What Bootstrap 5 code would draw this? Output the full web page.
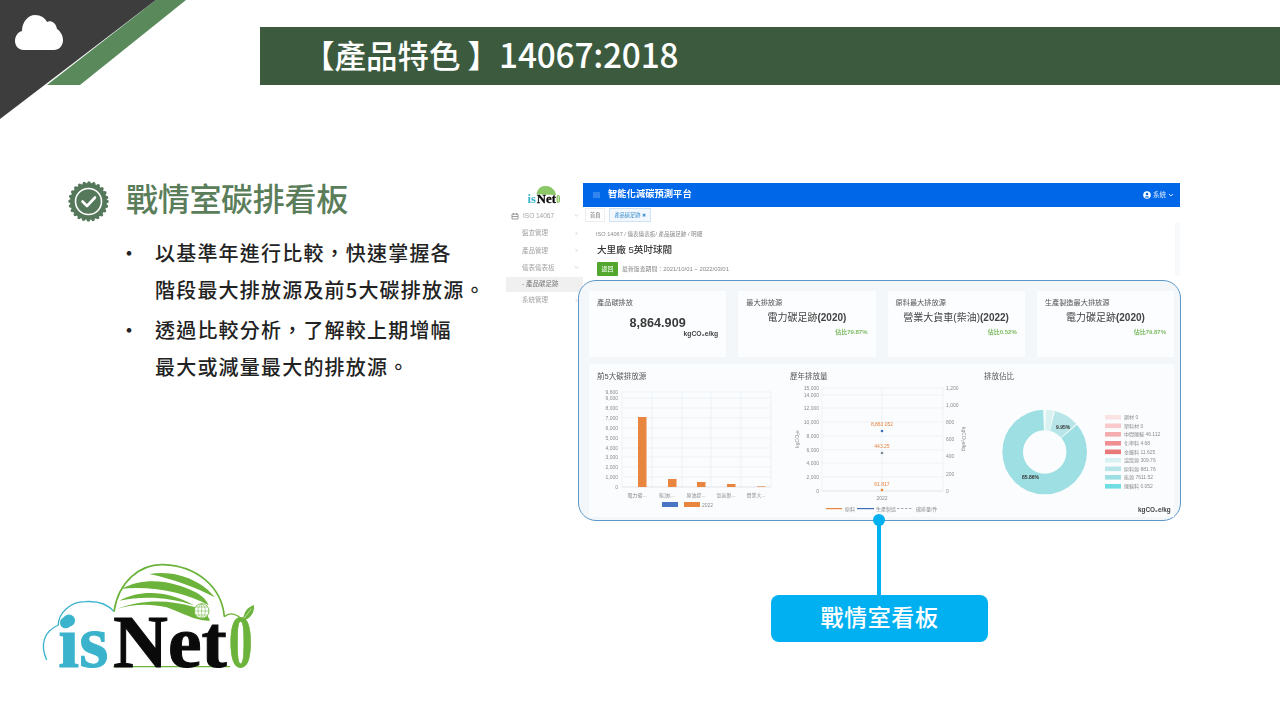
<!doctype html>
<html lang="zh-Hant">
<head>
<title>產品特色 14067:2018</title>
<meta charset="utf-8" />
<meta name="viewport" content="width=device-width, initial-scale=1" />
<link href="https://cdn.jsdelivr.net/npm/bootstrap@5.3.3/dist/css/bootstrap.min.css" rel="stylesheet" />
<script src="https://cdn.jsdelivr.net/npm/bootstrap@5.3.3/dist/js/bootstrap.bundle.min.js"></script>
<style>
  html, body { margin: 0; background: #fff; }
  body { font-family: "Noto Sans CJK TC", "Noto Sans", sans-serif; overflow: hidden; }
  .slide { position: relative; width: 1280px; height: 720px; overflow: hidden; }
  .corner { position: absolute; left: 0; top: 0; }
  .title-bar { margin: 27px 0 0 260px; height: 58px; background: #3c5a3e; color: #fff; font-size: 31.5px; line-height: 54px; padding-left: 43px; font-weight: 500; }
  .title-num { font-size: 33.4px; letter-spacing: -.2px; }
  .left-col { width: 506px; height: 595px; padding: 96px 0 0 30px; }
  .feat-head { margin-left: 38px; gap: 17px; color: #5a7d5a; font-size: 32px; font-weight: 500; letter-spacing: -.3px; }
  .feat-head span { line-height: 33px; margin-bottom: 8px; }
  .feat-list { margin: 12px 0 0 38px; padding: 0; list-style: none; color: #222; font-size: 20px; line-height: 37px; font-weight: 500; letter-spacing: 1.2px; }
  .feat-list li { position: relative; padding-left: 87px; }
  .feat-list li + li { margin-top: 3px; }
  .feat-list li::before { content: "•"; position: absolute; left: 51px; }
  .logo-box { margin-top: auto; margin-bottom: -4px; }
  .right-col { width: 675px; padding-top: 98px; }

  .shot { height: 338px; filter: blur(.45px); font-family: "Liberation Sans", "Noto Sans CJK TC", sans-serif; }
  .shot-side { width: 77px; color: #a4a4a4; font-size: 6.5px; }
  .shot-logo { height: 24px; padding: 3px 0 0 19px; }
  .side-row { height: 17.4px; padding: 0 4px 0 16px; }
  .side-row.on { height: 15px; background: #f0f0f0; color: #777; margin: 0; }
  .side-top { padding-left: 5px; }
  .shot-main { width: 597px; }
  .shot-bar { height: 24px; background: #0068e8; color: #fff; padding: 0 6px 0 10px; font-size: 9.3px; font-weight: 700; gap: 8px; }
  .shot-user { font-size: 6.5px; font-weight: 400; gap: 2px; color: #dce9fb; }
  .shot-tabs { height: 16px; padding: 1px 0 0 2px; gap: 4px; font-size: 5.2px; color: #666; }
  .shot-tab { height: 14px; padding: 0 4px; border: 1px solid #eee; line-height: 12px; }
  .shot-tab.on { border-color: #cfe3f5; background: #f2f8fd; color: #3d8fd1; }
  .shot-head { height: 53px; border-right: 5px solid #f7f9fb; }
  .shot-crumb { padding: 5px 0 0 13px; height: 17px; font-size: 5.6px; line-height: 12px; color: #888; }
  .shot-name { margin: 2px 0 0 14px; height: 16px; font-size: 9.6px; line-height: 16px; color: #333; font-weight: 500; }
  .shot-range { margin: 4px 0 0 14px; height: 14px; gap: 4px; font-size: 5.9px; color: #888; }
  .back-btn { width: 21px; height: 14px; background: #52a82e; color: #fff; font-size: 6px; line-height: 14px; text-align: center; border-radius: 1px; }
  .hl-box { margin: 4px -1px 0 -5px; height: 241px; border: 1px solid #5b97c9; border-radius: 18px; background: #f4f7fa; padding: 10px 6px 4px 10px; }
  .kpi-row { gap: 12px; height: 66px; }
  .kpi { flex: 1 1 0; background: #fbfdfe; padding: 6px 8px; color: #555; font-size: 7.2px; line-height: 11px; }
  .kpi-val { font-size: 12.6px; line-height: 16px; font-weight: 700; color: #3a3a3a; text-align: center; margin-top: 7px; }
  .kpi-unit { font-weight: 700; text-align: right; color: #444; font-size: 6.8px; line-height: 10px; margin-top: -2px; }
  .kpi-src { font-size: 10px; line-height: 14px; text-align: center; color: #444; margin-top: 3px; }
  .kpi-pct { font-size: 6px; line-height: 10px; margin-top: 2px; font-weight: 700; text-align: right; color: #7dbb62; }
  .chart-panel { margin-top: 7px; height: 153px; background: #fafcfe; }
  .chart-panel text { font-family: "Liberation Sans", "Noto Sans CJK TC", sans-serif; }
  .chart-panel .t-title { font-size: 7.5px; fill: #555; }
  .chart-panel .t-axis { font-size: 5px; fill: #8d8d8d; }

  .link-line { width: 4px; height: 74px; background: #00b0f0; margin-left: 371px; position: relative; }
  .link-line::before { content: ""; position: absolute; left: -4px; top: -7px; width: 12px; height: 12px; border-radius: 50%; background: #00b0f0; }
  .tag-box { width: 217px; height: 47px; margin-left: 265px; border-radius: 8px; background: #00b0f0; color: #fff; font-size: 23px; line-height: 43px; font-weight: 500; text-align: center; letter-spacing: .6px; }
</style>
</head>
<body>
<div class="slide">
  <svg class="corner" width="190" height="120" viewBox="0 0 190 120">
    <polygon points="156,0 186,0 80,85 47,85" fill="#5a8a5c"/>
    <polygon points="0,0 156,0 0,119" fill="#3d3d3d"/>
    <path d="M24 50C17 50 15 44 15 41C15 36 18 32 22 31C22 22 28 15 35 15C41 15 45 18 47 22C50 20 56 22 57 29C60 31 63 35 63 40C63 46 59 50 54 50Z" fill="#fff"/>
  </svg>

  <div class="title-bar">【產品特色 】<span class="title-num">14067:2018</span></div>

  <div class="d-flex">
    <div class="left-col d-flex flex-column">
      <div class="feat-head d-flex align-items-center">
        <svg width="41" height="41" viewBox="0 0 41 41">
          <circle cx="20.5" cy="20.5" r="18.5" fill="#55775a"/>
          <circle cx="20.5" cy="20.5" r="18.5" fill="none" stroke="#55775a" stroke-width="3.5" stroke-linecap="round" stroke-dasharray="0 4.84"/>
          <circle cx="20.5" cy="20.5" r="13" fill="none" stroke="#fff" stroke-width="1.6"/>
          <path d="M14.5 20.5L19 25L27 16.5" fill="none" stroke="#fff" stroke-width="2.6" stroke-linecap="round" stroke-linejoin="round"/>
        </svg>
        <span>戰情室碳排看板</span>
      </div>
      <ul class="feat-list">
        <li>以基準年進行比較，快速掌握各<br>階段最大排放源及前5大碳排放源。</li>
        <li>透過比較分析，了解較上期增幅<br>最大或減量最大的排放源。</li>
      </ul>
      <div class="logo-box">
        <svg class="d-block" width="240" height="134" viewBox="0 0 720 402">
          <path d="M50 330C30 285 40 245 85 225C85 190 120 155 165 155C205 152 235 165 252 185" fill="none" stroke="#3bb3cc" stroke-width="4"/>
          <path d="M252 185C265 95 330 42 400 44C500 48 575 110 583 200" fill="none" stroke="#6bb33a" stroke-width="5"/>
          <path d="M583 200C600 185 625 192 637 212" fill="none" stroke="#6bb33a" stroke-width="4"/>
          <path d="M358 72C440 58 520 95 554 142C500 112 430 88 358 72Z" fill="#6bb33a"/>
          <path d="M275 116C345 78 430 92 500 128C520 140 530 152 536 166C470 130 380 108 275 116Z" fill="#6bb33a"/>
          <path d="M268 152C340 115 420 126 492 166C420 142 340 136 268 152Z" fill="#6bb33a"/>
          <path d="M262 176C340 146 420 150 490 170C520 180 535 195 540 212C500 215 460 190 410 172C360 160 310 162 262 176Z" fill="#6bb33a"/>
          <circle cx="515" cy="183" r="22" fill="#fff" stroke="#6bb33a" stroke-width="2.5"/>
          <path d="M493 183H537M515 161V205M515 161C500 172 500 194 515 205M515 161C530 172 530 194 515 205M498 171H532M498 195H532" fill="none" stroke="#6bb33a" stroke-width="1.5"/>
          <path d="M638 212C642 185 652 172 672 165C674 190 660 207 638 212Z" fill="#6bb33a"/>
          <path d="M640 208L664 176" stroke="#fff" stroke-width="1.5"/>
          <path d="M250 350H600" stroke="#6bb33a" stroke-width="4"/>
          <g font-family="Liberation Serif" font-weight="700" font-size="222" stroke-width="3">
            <text x="85" y="350" fill="#3bb3cc" stroke="#3bb3cc" textLength="150" lengthAdjust="spacingAndGlyphs">is</text>
            <text x="250" y="350" fill="#0a0a0a" stroke="#0a0a0a" textLength="340" lengthAdjust="spacingAndGlyphs">Net</text>
            <text x="597" y="350" fill="#6bb33a" stroke="#6bb33a" textLength="70" lengthAdjust="spacingAndGlyphs">0</text>
          </g>
          <circle cx="107" cy="218" r="17" fill="#3bb3cc"/>
        </svg>
      </div>
    </div>

    <div class="right-col">
      <div class="shot d-flex">
        <div class="shot-side flex-shrink-0">
          <div class="shot-logo">
            <svg class="d-block" width="38.25" height="21" viewBox="40 40 680 373">
              <path d="M252 185C265 95 330 42 400 44C500 48 575 110 583 200" fill="#8cc868" stroke="#6bb33a" stroke-width="10"/>
              <g font-family="Liberation Serif" font-weight="700" font-size="222" stroke-width="5">
                <text x="85" y="350" fill="#3bb3cc" textLength="150" lengthAdjust="spacingAndGlyphs">is</text>
                <text x="250" y="350" fill="#0a0a0a" stroke="#0a0a0a" textLength="340" lengthAdjust="spacingAndGlyphs">Net</text>
                <text x="597" y="350" fill="#6bb33a" textLength="70" lengthAdjust="spacingAndGlyphs">0</text>
              </g>
            </svg>
          </div>
          <div class="side-row side-top d-flex align-items-center justify-content-between">
            <span class="d-flex align-items-center gap-1">
              <svg width="8" height="8" viewBox="0 0 8 8"><path d="M1 2H7V7H1ZM2.5 1V3M5.5 1V3M1 4.5H7" fill="none" stroke="#888" stroke-width=".8"/></svg>
              ISO 14067
            </span>
            <svg width="5" height="5" viewBox="0 0 5 5"><path d="M.8 1.5L2.5 3.2L4.2 1.5" fill="none" stroke="#bbb" stroke-width=".6"/></svg>
          </div>
          <div class="side-row d-flex align-items-center justify-content-between"><span>盤查管理</span>
            <svg width="5" height="5" viewBox="0 0 5 5"><path d="M1.5 .8L3.2 2.5L1.5 4.2" fill="none" stroke="#bbb" stroke-width=".6"/></svg></div>
          <div class="side-row d-flex align-items-center justify-content-between"><span>產品管理</span>
            <svg width="5" height="5" viewBox="0 0 5 5"><path d="M1.5 .8L3.2 2.5L1.5 4.2" fill="none" stroke="#bbb" stroke-width=".6"/></svg></div>
          <div class="side-row d-flex align-items-center justify-content-between"><span>儀表儀表板</span>
            <svg width="5" height="5" viewBox="0 0 5 5"><path d="M.8 1.5L2.5 3.2L4.2 1.5" fill="none" stroke="#bbb" stroke-width=".6"/></svg></div>
          <div class="side-row on d-flex align-items-center">- 產品碳足跡</div>
          <div class="side-row d-flex align-items-center justify-content-between"><span>系統管理</span>
            <svg width="5" height="5" viewBox="0 0 5 5"><path d="M1.5 .8L3.2 2.5L1.5 4.2" fill="none" stroke="#bbb" stroke-width=".6"/></svg></div>
        </div>

        <div class="shot-main d-flex flex-column">
          <div class="shot-bar d-flex align-items-center">
            <svg width="7" height="6" viewBox="0 0 7 6"><path d="M0 1H7M0 3H7M0 5H7" stroke="#7fb2f2" stroke-width=".8"/></svg>
            <span>智能化減碳預測平台</span>
            <span class="shot-user d-flex align-items-center ms-auto">
              <svg width="8" height="8" viewBox="0 0 8 8"><circle cx="4" cy="4" r="3.8" fill="#fff"/><circle cx="4" cy="3" r="1.3" fill="#0068e8"/><path d="M1.6 6.4C2.5 4.9 5.5 4.9 6.4 6.4" fill="#0068e8"/></svg>
              系統
              <svg width="6" height="6" viewBox="0 0 6 6"><path d="M1 2L3 4L5 2" fill="none" stroke="#fff" stroke-width=".8"/></svg>
            </span>
          </div>
          <div class="shot-tabs d-flex">
            <div class="shot-tab">首頁</div>
            <div class="shot-tab on">產品碳足跡 ✖</div>
          </div>
          <div class="shot-head">
            <div class="shot-crumb">ISO 14067 / 儀表儀表板/ 產品碳足跡 / 明細</div>
            <div class="shot-name">大里廠 5英吋球閥</div>
            <div class="shot-range d-flex align-items-center">
              <span class="back-btn">返回</span>
              <span>最新盤查期間：2021/10/01 ~ 2022/03/01</span>
            </div>
          </div>
          <div class="hl-box">
            <div class="kpi-row d-flex">
              <div class="kpi">
                <div>產品碳排放</div>
                <div class="kpi-val">8,864.909</div>
                <div class="kpi-unit">kgCO₂e/kg</div>
              </div>
              <div class="kpi">
                <div>最大排放源</div>
                <div class="kpi-src">電力碳足跡<b>(2020)</b></div>
                <div class="kpi-pct">佔比79.87%</div>
              </div>
              <div class="kpi">
                <div>原料最大排放源</div>
                <div class="kpi-src">營業大貨車(柴油)<b>(2022)</b></div>
                <div class="kpi-pct">佔比0.52%</div>
              </div>
              <div class="kpi">
                <div>生產製造最大排放源</div>
                <div class="kpi-src">電力碳足跡<b>(2020)</b></div>
                <div class="kpi-pct">佔比79.87%</div>
              </div>
            </div>
            <div class="chart-panel d-flex">
              <svg width="191" height="153" viewBox="589 364 191 153">
                <text class="t-title" x="597" y="379">前5大碳排放源</text>
                <g stroke="#e8edf2" stroke-width=".6">
                  <path d="M622 392H771M622 398H771M622 408H771M622 418H771M622 428H771M622 438H771M622 448H771M622 457H771M622 467H771M622 477H771"/>
                  <path d="M622 392V487M652 392V487M682 392V487M711 392V487M741 392V487M771 392V487"/>
                </g>
                <path d="M622 487H771" stroke="#d5d9de" stroke-width=".7"/>
                <g class="t-axis" text-anchor="end">
                  <text x="618" y="394">9,600</text><text x="618" y="400">9,000</text><text x="618" y="410">8,000</text><text x="618" y="420">7,000</text><text x="618" y="430">6,000</text><text x="618" y="440">5,000</text><text x="618" y="450">4,000</text><text x="618" y="459">3,000</text><text x="618" y="469">2,000</text><text x="618" y="479">1,000</text><text x="618" y="489">0</text>
                </g>
                <g fill="#e8853f">
                  <rect x="638" y="417" width="8.5" height="70"/>
                  <rect x="668" y="479" width="8.5" height="8"/>
                  <rect x="697" y="482" width="8.5" height="5"/>
                  <rect x="727" y="484" width="8.5" height="3"/>
                  <rect x="757" y="486.4" width="8.5" height=".6"/>
                </g>
                <g class="t-axis" text-anchor="middle">
                  <text x="637" y="497">電力碳...</text><text x="667" y="497">柴油(...</text><text x="696" y="497">原油提...</text><text x="726" y="497">氫氣製...</text><text x="756" y="497">營業大...</text>
                </g>
                <rect x="662" y="502" width="16" height="5" fill="#4a74c4"/>
                <rect x="684" y="502" width="16" height="5" fill="#e8853f"/>
                <text class="t-axis" x="702" y="506.5">2022</text>
              </svg>
              <svg width="195" height="153" viewBox="780 364 195 153">
                <text class="t-title" x="790" y="379">歷年排放量</text>
                <g stroke="#e8edf2" stroke-width=".6">
                  <path d="M822 388H943M822 395H943M822 408H943M822 422H943M822 436H943M822 450H943M822 463H943M822 477H943"/>
                  <path d="M822 388V491M882 388V491M943 388V491"/>
                </g>
                <path d="M822 491H943" stroke="#d5d9de" stroke-width=".7"/>
                <g class="t-axis" text-anchor="end">
                  <text x="819" y="390">15,000</text><text x="819" y="397">14,000</text><text x="819" y="410">12,000</text><text x="819" y="424">10,000</text><text x="819" y="438">8,000</text><text x="819" y="452">6,000</text><text x="819" y="465">4,000</text><text x="819" y="479">2,000</text><text x="819" y="493">0</text>
                </g>
                <g class="t-axis">
                  <text x="946" y="390">1,200</text><text x="946" y="407">1,000</text><text x="946" y="424">800</text><text x="946" y="441">600</text><text x="946" y="458">400</text><text x="946" y="476">200</text><text x="946" y="493">0</text>
                </g>
                <text class="t-axis" transform="translate(799 439) rotate(-90)" text-anchor="middle">kgCO₂e</text>
                <text class="t-axis" transform="translate(962 439) rotate(90)" text-anchor="middle">kgCO₂e/kg</text>
                <circle cx="882" cy="431" r="1.3" fill="#3f6db5"/>
                <circle cx="882" cy="453" r="1.3" fill="#7c8a99"/>
                <circle cx="882" cy="490" r="1.3" fill="#e8853f"/>
                <g font-size="5" fill="#e8853f" text-anchor="middle">
                  <text x="882" y="425.5">8,863.052</text><text x="882" y="448">443.25</text><text x="882" y="485.5">61.817</text>
                </g>
                <text class="t-axis" x="882" y="500" text-anchor="middle">2022</text>
                <rect x="826" y="508" width="16" height="1.2" fill="#e8853f"/>
                <rect x="857" y="508" width="17" height="1.2" fill="#3f6db5"/>
                <path d="M897 508.5H913" stroke="#8896a5" stroke-width=".8" stroke-dasharray="2.5 1.5"/>
                <g class="t-axis"><text x="845" y="510.5">原料</text><text x="876" y="510.5">生產製造</text><text x="916" y="510.5">碳排量/件</text></g>
              </svg>
              <svg width="199" height="153" viewBox="975 364 199 153">
                <text class="t-title" x="984" y="379">排放佔比</text>
                <!-- segments are circumference fractions on r=32, c=201.06 -->
                <g fill="none" stroke-width="20.6" transform="rotate(-90 1044.7 452)">
                  <circle cx="1044.7" cy="452" r="32" stroke="#9ddfe2" stroke-dasharray="172.6 201.06" stroke-dashoffset="-27.0"/>
                  <circle cx="1044.7" cy="452" r="32" stroke="#d9f1f1" stroke-dasharray="7 201.06"/>
                  <circle cx="1044.7" cy="452" r="32" stroke="#b8e6e8" stroke-dasharray="20 201.06" stroke-dashoffset="-7"/>
                  <g stroke="#fff" stroke-width="21" stroke-dasharray=".8 201.06">
                    <circle cx="1044.7" cy="452" r="32"/>
                    <circle cx="1044.7" cy="452" r="32" stroke-dashoffset="-7"/>
                    <circle cx="1044.7" cy="452" r="32" stroke-dashoffset="-27"/>
                  </g>
                </g>
                <g font-size="5" font-weight="700" fill="#333">
                  <text x="1056" y="428.5">9.95%</text><text x="1022" y="479">85.86%</text>
                </g>
                <g>
                  <rect x="1105" y="415" width="16" height="4.6" fill="#fbe3e3"/>
                  <rect x="1105" y="423.5" width="16" height="4.6" fill="#f9c9cc"/>
                  <rect x="1105" y="432" width="16" height="4.6" fill="#f6adb0"/>
                  <rect x="1105" y="441" width="16" height="4.6" fill="#f08f92"/>
                  <rect x="1105" y="449.5" width="16" height="4.6" fill="#e97a7a"/>
                  <rect x="1105" y="458" width="16" height="4.6" fill="#d9f1f1"/>
                  <rect x="1105" y="466.5" width="16" height="4.6" fill="#b8e6e8"/>
                  <rect x="1105" y="475" width="16" height="4.6" fill="#9ddfe2"/>
                  <rect x="1105" y="484" width="16" height="4.6" fill="#6fdde3"/>
                </g>
                <g class="t-axis">
                  <text x="1124" y="419">鋼材 0</text><text x="1124" y="427.5">塑料材 0</text><text x="1124" y="436">中間運輸 46.112</text><text x="1124" y="445">化學料 4.68</text><text x="1124" y="453.5">金屬料 11.625</text><text x="1124" y="462">溫散源 309.76</text><text x="1124" y="470.5">原料源 881.76</text><text x="1124" y="479">能源 7611.52</text><text x="1124" y="488">運輸料 0.052</text>
                </g>
                <text x="1138" y="512" font-size="6.4" font-weight="700" fill="#444">kgCO₂e/kg</text>
              </svg>
            </div>
          </div>
        </div>
      </div>
      <div class="link-line"></div>
      <div class="tag-box">戰情室看板</div>
    </div>
  </div>
</div>
</body>
</html>
